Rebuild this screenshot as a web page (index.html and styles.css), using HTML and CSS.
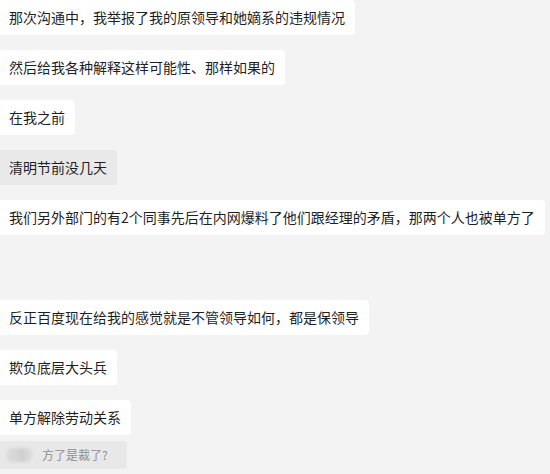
FILE: index.html
```html
<!DOCTYPE html>
<html lang="zh-CN">
<head>
<meta charset="UTF-8" />
<meta name="viewport" content="width=device-width, initial-scale=1" />
<title>聊天记录</title>
<link rel="stylesheet" href="styles.css">
</head>
<body>
  <main class="chat">
    <div class="bubble">那次沟通中，我举报了我的原领导和她嫡系的违规情况</div>
    <div class="bubble">然后给我各种解释这样可能性、那样如果的</div>
    <div class="bubble">在我之前</div>
    <div class="bubble bubble-gray">清明节前没几天</div>
    <div class="bubble">我们另外部门的有2个同事先后在内网爆料了他们跟经理的矛盾，那两个人也被单方了</div>
    <div class="spacer"></div>
    <div class="bubble">反正百度现在给我的感觉就是不管领导如何，都是保领导</div>
    <div class="bubble">欺负底层大头兵</div>
    <div class="bubble">单方解除劳动关系</div>
    <div class="quote">
      <span class="quote-name"></span>
      <span class="quote-text">方了是裁了?</span>
    </div>
  </main>
</body>
</html>
```

FILE: styles.css
```css
* {
  box-sizing: border-box;
}
body {
  margin: 0;
  background: #f3f3f3;
  font-family: "Microsoft YaHei", "Noto Sans CJK SC", "Noto Sans", sans-serif;
  color: #1f1f1f;
  overflow: hidden;
}

/* Chat column */
.chat {
  display: flex;
  flex-direction: column;
  align-items: flex-start;
  gap: 15px;
}
.bubble {
  background: #ffffff;
  border-radius: 0 4px 4px 0;
  padding: 8px 10px 8px 9px;
  font-size: 14px;
  line-height: 19px;
  height: 35px;
  white-space: nowrap;
}
.bubble-gray {
  background: #e9e9e9;
}
.spacer {
  height: 35px;
}

/* Quoted reply */
.quote {
  margin-top: -9px;
  display: flex;
  align-items: center;
  gap: 9px;
  height: 28px;
  width: 127px;
  padding-left: 6px;
  background: #e8e8e8;
  border-radius: 0 3px 3px 0;
}
.quote-name {
  width: 27px;
  height: 14px;
  border-radius: 7px;
  background: linear-gradient(90deg, #dcdcdc 0%, #d0d0d0 60%, #dedede 100%);
  filter: blur(1.5px);
}
.quote-text {
  font-size: 12px;
  line-height: 16px;
  color: #8e8e8e;
}
```
